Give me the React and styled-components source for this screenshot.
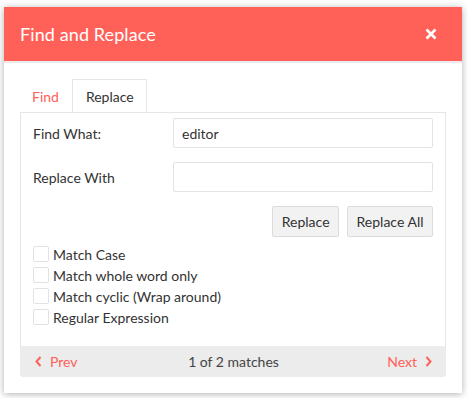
import React from "react";
import styled, { createGlobalStyle } from "styled-components";

const Global = createGlobalStyle`
  html, body { margin: 0; padding: 0; background: #ffffff; }
  body { font-family: Lato, "Liberation Sans", sans-serif; }
  * { box-sizing: border-box; }
`;

const RED = "#ff6159";

const Page = styled.div`
  padding: 7px 6px 5px 4px;
`;

const Dialog = styled.div`
  width: 458px;
  height: 386px;
  background: #fff;
  box-shadow: 0 1px 7px rgba(0, 0, 0, 0.32);
  display: flex;
  flex-direction: column;
`;

const Header = styled.div`
  height: 56px;
  flex: none;
  background: ${RED};
  border-bottom: 2px solid #ebebeb;
  display: flex;
  align-items: center;
  justify-content: space-between;
  padding: 0 25px 0 16px;
`;

const Title = styled.h1`
  margin: 0;
  font-size: 18px;
  font-weight: 400;
  color: #fff;
  letter-spacing: 0.1px;
`;

const CloseButton = styled.button`
  border: 0;
  background: none;
  padding: 0;
  width: 12px;
  height: 12px;
  display: flex;
  cursor: pointer;
`;

const Body = styled.div`
  flex: 1;
  padding: 16px;
  display: flex;
  flex-direction: column;
`;

const TabList = styled.div`
  display: flex;
  height: 33px;
  flex: none;
`;

const Tab = styled.div`
  height: 33px;
  padding: ${(p) => (p.$active ? "0 12px 0 13px" : "0 12px 0 11px")};
  display: flex;
  align-items: center;
  font-size: 14px;
  color: ${(p) => (p.$active ? "#333" : RED)};
  background: #fff;
  border: 1px solid ${(p) => (p.$active ? "#e6e6e6" : "transparent")};
  border-bottom: 0;
  margin-bottom: -1px;
  position: relative;
  z-index: 1;
`;

const Panel = styled.div`
  flex: 1;
  border: 1px solid #e6e6e6;
  border-bottom: 0;
  padding: 5px 12px 0 12px;
  display: flex;
  flex-direction: column;
`;

const FieldRow = styled.div`
  display: flex;
  align-items: center;
  margin-bottom: 14px;
`;

const Label = styled.label`
  width: 140px;
  flex: none;
  font-size: 14px;
  color: #333;
`;

const Input = styled.input`
  flex: 1;
  height: 30px;
  border: 1px solid #e3e3e3;
  border-radius: 2px;
  padding: 0 8px;
  font: inherit;
  font-size: 14px;
  color: #333;
  outline: none;
`;

const ButtonRow = styled.div`
  display: flex;
  justify-content: flex-end;
  gap: 8px;
  margin-bottom: 9px;
`;

const Button = styled.button`
  height: 31px;
  padding: 0 8.5px;
  background: #f2f2f2;
  border: 1px solid #dcdcdc;
  border-radius: 2px;
  font: inherit;
  font-size: 14px;
  color: #333;
`;

const CheckList = styled.div`
  display: flex;
  flex-direction: column;
  gap: 5px;
`;

const CheckRow = styled.label`
  display: flex;
  align-items: center;
  gap: 4px;
  height: 16px;
  font-size: 14px;
  color: #333;
`;

const Box = styled.span`
  width: 16px;
  height: 16px;
  border: 1px solid #e2e2e2;
  border-radius: 2px;
  background: #fff;
  flex: none;
`;

const Footer = styled.div`
  height: 31px;
  flex: none;
  background: #ececec;
  border-radius: 0 0 3px 3px;
  display: grid;
  grid-template-columns: 1fr auto 1fr;
  align-items: center;
  padding: 0 14px 0 15px;
  font-size: 14px;
`;

const NavLink = styled.a`
  display: flex;
  align-items: center;
  gap: 8px;
  color: ${RED};
  text-decoration: none;
  justify-self: ${(p) => (p.$end ? "end" : "start")};
  cursor: pointer;
`;

const Count = styled.span`
  color: #444;
`;

const Chevron = ({ dir }) => (
  <svg width="7" height="11" viewBox="0 0 7 11">
    <polyline
      points={dir === "left" ? "5.5,1 1.5,5.5 5.5,10" : "1.5,1 5.5,5.5 1.5,10"}
      fill="none"
      stroke={RED}
      strokeWidth="2"
    />
  </svg>
);

const options = [
  "Match Case",
  "Match whole word only",
  "Match cyclic (Wrap around)",
  "Regular Expression",
];

export default function App() {
  return (
    <>
      <Global />
      <Page>
        <Dialog>
          <Header>
            <Title>Find and Replace</Title>
            <CloseButton aria-label="Close">
              <svg width="12" height="12" viewBox="0 0 12 12">
                <path d="M1.5 1.5 L10.5 10.5 M10.5 1.5 L1.5 10.5" stroke="#fff" strokeWidth="2.6" />
              </svg>
            </CloseButton>
          </Header>
          <Body>
            <TabList>
              <Tab>Find</Tab>
              <Tab $active>Replace</Tab>
            </TabList>
            <Panel>
              <FieldRow>
                <Label>Find What:</Label>
                <Input defaultValue="editor" />
              </FieldRow>
              <FieldRow>
                <Label>Replace With</Label>
                <Input defaultValue="" />
              </FieldRow>
              <ButtonRow>
                <Button>Replace</Button>
                <Button>Replace All</Button>
              </ButtonRow>
              <CheckList>
                {options.map((o) => (
                  <CheckRow key={o}>
                    <Box />
                    {o}
                  </CheckRow>
                ))}
              </CheckList>
            </Panel>
            <Footer>
              <NavLink>
                <Chevron dir="left" />
                Prev
              </NavLink>
              <Count>1 of 2 matches</Count>
              <NavLink $end>
                Next
                <Chevron dir="right" />
              </NavLink>
            </Footer>
          </Body>
        </Dialog>
      </Page>
    </>
  );
}
